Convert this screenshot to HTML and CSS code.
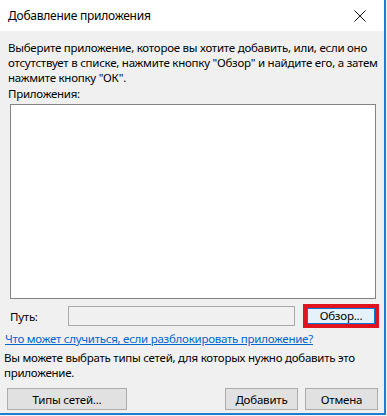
FILE: index.html
```html
<!DOCTYPE html>
<html lang="ru">
<head>
<meta charset="utf-8">
<title>Добавление приложения</title>
<link rel="stylesheet" href="styles.css">
</head>
<body>
<div class="window">
  <div class="titlebar">
    <span class="title">Добавление приложения</span>
    <svg class="close" width="12" height="12" viewBox="0 0 12 12"><path d="M0.5 0.5 L11.5 11.5 M11.5 0.5 L0.5 11.5" stroke="#111" stroke-width="1" fill="none"/></svg>
  </div>
  <div class="content">
    <p class="intro">Выберите приложение, которое вы хотите добавить, или, если оно отсутствует в списке, нажмите кнопку "Обзор" и найдите его, а затем нажмите кнопку "ОК".</p>
    <div class="label">Приложения:</div>
    <div class="listbox"></div>
    <div class="pathrow">
      <span class="pathlabel">Путь:</span>
      <div class="pathbox"></div>
      <div class="highlight"><button class="btn browse">Обзор...</button></div>
    </div>
    <a class="link" href="#">Что может случиться, если разблокировать приложение?</a>
    <p class="note">Вы можете выбрать типы сетей, для которых нужно добавить это приложение.</p>
    <div class="buttons">
      <button class="btn nettypes">Типы сетей...</button>
      <div class="right">
        <button class="btn">Добавить</button>
        <button class="btn">Отмена</button>
      </div>
    </div>
  </div>
</div>
</body>
</html>
```
FILE: styles.css
```css
html, body {
  margin: 0;
  padding: 0;
  background: #f4f6f8;
}
body {
  font-family: "Noto Sans", "Open Sans", sans-serif;
  font-size: 11.5px;
  letter-spacing: -0.25px;
  color: #000;
}
.window {
  width: 384px;
  height: 413px;
  border-right: 2px solid #1a7fd4;
  border-bottom: 2px solid #1a7fd4;
  background: #f0f0f0;
  display: flex;
  flex-direction: column;
}
.titlebar {
  height: 31px;
  background: #fff;
  display: flex;
  align-items: center;
  justify-content: space-between;
  padding: 0 18px 0 8px;
  flex: none;
}
.title {
  font-size: 12px;
  color: #000;
}
.close {
  display: block;
}
.content {
  padding: 9px 3px 0 8px;
  display: flex;
  flex-direction: column;
}
.intro {
  margin: 0;
  line-height: 15px;
}
.label {
  margin-top: 1px;
  line-height: 15px;
}
.listbox {
  margin: 3px 0 0 2px;
  width: 364px;
  height: 193px;
  background: #fff;
  border: 1px solid #828282;
}
.pathrow {
  display: flex;
  align-items: center;
  margin-top: 5px;
  height: 24px;
}
.pathlabel {
  width: 58px;
  padding-left: 2px;
}
.pathbox {
  width: 225px;
  height: 18px;
  border: 1px solid #a9a9a9;
  background: #f0f0f0;
}
.highlight {
  margin-left: 8px;
  border: 4px solid #e0141e;
  display: flex;
}
.btn {
  font-family: inherit;
  font-size: 11.5px;
  letter-spacing: -0.2px;
  color: #000;
  background: #e1e1e1;
  border: 1px solid #adadad;
  padding: 0;
  height: 22px;
  margin: 0;
}
.browse {
  width: 68px;
  height: 16px;
  line-height: 14px;
  background: #e5f1fb;
  border-color: #0078d7;
}
.link {
  margin: 3px 0 0 -3px;
  line-height: 15px;
  color: #0066cc;
  text-decoration: underline;
  align-self: flex-start;
}
.note {
  margin: 4px 0 0 -4px;
  line-height: 15px;
}
.buttons {
  margin-top: 8px;
  display: flex;
  justify-content: flex-start;
  margin-left: -1px;
}
.nettypes {
  width: 120px;
}
.right {
  display: flex;
  gap: 7px;
  margin-left: 98px;
}
.right .btn {
  width: 73px;
}
```
